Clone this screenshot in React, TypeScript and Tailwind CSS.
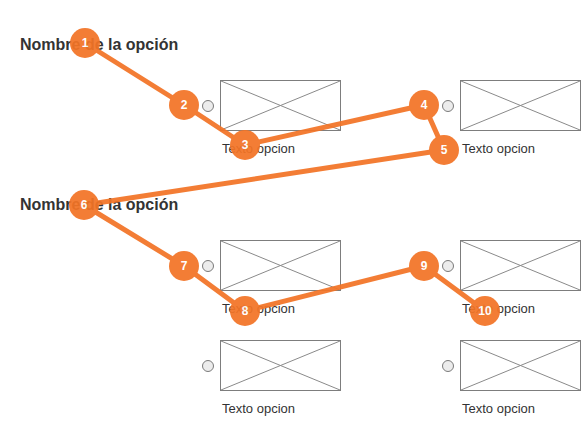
const markers: [number, number][] = [
  [85, 43],
  [184, 105],
  [245, 145],
  [424, 105],
  [444, 150],
  [84, 205],
  [184, 266],
  [245, 311],
  [424, 266],
  [485, 311],
];

function Option() {
  return (
    <div className="w-[139px]">
      <div className="flex items-center gap-[6px]">
        <div className="w-[12px] h-[12px] rounded-full border border-[#7a7a7a] bg-[#ececec]" />
        <div className="w-[121px] h-[51px] border border-[#7d7d7d]">
          <svg width="119" height="49" viewBox="0 0 119 49" className="block">
            <line x1="0" y1="0" x2="119" y2="49" stroke="#8a8a8a" strokeWidth="1" />
            <line x1="119" y1="0" x2="0" y2="49" stroke="#8a8a8a" strokeWidth="1" />
          </svg>
        </div>
      </div>
      <p className="mt-[10px] pl-[20px] text-[13px] leading-[16px] text-[#333]">Texto opcion</p>
    </div>
  );
}

function OptionRow() {
  return (
    <div className="flex gap-[101px] pl-[202px]">
      <Option />
      <Option />
    </div>
  );
}

export default function App() {
  return (
    <div
      className="relative w-[588px] h-[428px] overflow-hidden bg-white"
      style={{ fontFamily: '"Liberation Sans", Arial, sans-serif' }}
    >
      {/* Section 1 */}
      <div className="pt-[37px]">
        <h2 className="pl-[20px] text-[16px] leading-[16px] font-bold text-[#333]">Nombre de la opción</h2>
        <div className="mt-[27px]">
          <OptionRow />
        </div>
      </div>

      {/* Section 2 */}
      <div className="mt-[40px]">
        <h2 className="pl-[20px] text-[16px] leading-[16px] font-bold text-[#333]">Nombre de la opción</h2>
        <div className="mt-[27px] flex flex-col gap-[23px]">
          <OptionRow />
          <OptionRow />
        </div>
      </div>

      {/* Tab order overlay */}
      <svg className="absolute inset-0 pointer-events-none" width="588" height="428">
        <g opacity="0.93">
          <polyline
            points={markers.map((m) => m.join(',')).join(' ')}
            fill="none"
            stroke="#f37426"
            strokeWidth="5"
            strokeLinejoin="round"
          />
          {markers.map(([x, y], i) => (
            <g key={i}>
              <circle cx={x} cy={y} r="15" fill="#f37426" />
              <text
                x={x}
                y={y + 4}
                textAnchor="middle"
                fontSize="12"
                fontWeight="bold"
                fill="#fff"
                fontFamily='"Liberation Sans", Arial, sans-serif'
              >
                {i + 1}
              </text>
            </g>
          ))}
        </g>
      </svg>
    </div>
  );
}
